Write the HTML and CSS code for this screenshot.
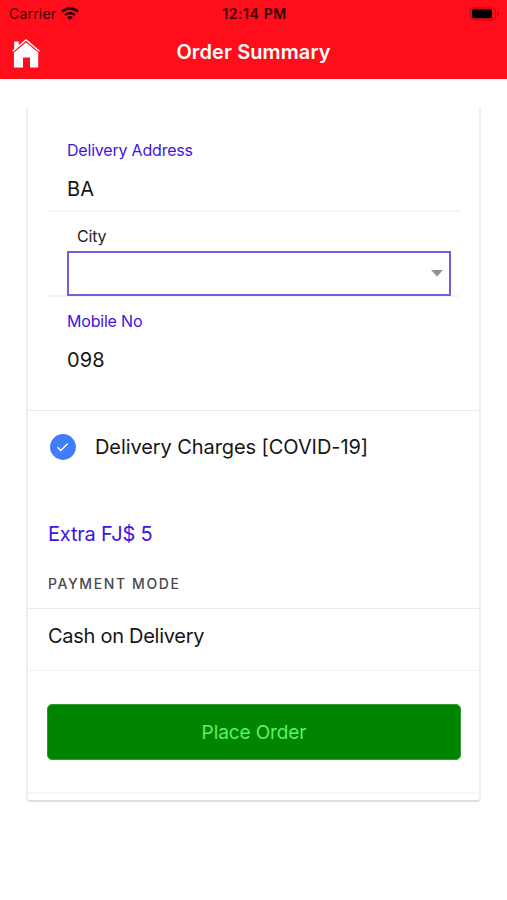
FILE: index.html
```html
<!DOCTYPE html>
<html lang="en">
<head>
  <meta charset="UTF-8">
  <meta name="viewport" content="width=device-width, initial-scale=1.0">
  <title>Order Summary</title>
  <link rel="stylesheet" href="styles.css">
</head>
<body>
  <header class="header">
    <div class="status-bar">
      <div class="carrier">
        <span class="carrier-name">Carrier</span>
        <svg class="wifi" width="18" height="14" viewBox="0 0 18 14">
          <path d="M1 4.6a11.6 11.6 0 0 1 16 0" fill="none" stroke="currentColor" stroke-width="2.5"/>
          <path d="M4.1 8a7.2 7.2 0 0 1 9.8 0" fill="none" stroke="currentColor" stroke-width="2.3"/>
          <path d="M6.2 10.3a4.1 4.1 0 0 1 5.6 0L9 13.1z" fill="currentColor"/>
        </svg>
      </div>
      <span class="time">12:14 PM</span>
      <svg class="battery" width="31" height="14" viewBox="0 0 31 14">
        <rect x="1.5" y="0.9" width="25" height="12" rx="3.6" fill="none" stroke="#bd0711" stroke-width="1"/>
        <rect x="3" y="2.3" width="20" height="9" rx="1.6" fill="#000"/>
        <path d="M28.3 5v4c1.5-.6 1.5-3.4 0-4z" fill="#900010"/>
      </svg>
    </div>
    <div class="nav-bar">
      <a class="home" href="#" aria-label="Home">
        <svg width="28" height="30" viewBox="0 0 28 30">
          <path d="M2.2 2.4h4.6v4L2.2 10.3z" fill="#fff"/>
          <path d="M0.6 12.3L14 1l13.4 11.3" fill="none" stroke="#fff" stroke-width="1.4"/>
          <path d="M14 3.6l12.2 10V28.5h-8.2v-10h-7v10H1.9V13.6z" fill="#fff"/>
        </svg>
      </a>
      <h1>Order Summary</h1>
    </div>
  </header>

  <main class="card">
    <form class="address-form">
      <div class="field">
        <label>Delivery Address</label>
        <div class="value">BA</div>
      </div>
      <div class="field city">
        <label>City</label>
        <div class="select">
          <svg width="12" height="7" viewBox="0 0 12 7"><path d="M0 0h12L6 6.5z" fill="#929292"/></svg>
        </div>
      </div>
      <div class="field mobile">
        <label>Mobile No</label>
        <div class="value">098</div>
      </div>
    </form>

    <section class="charges">
      <div class="charge-row">
        <svg class="check" width="26" height="26" viewBox="0 0 26 26">
          <circle cx="13" cy="13" r="12.9" fill="#3f7dfb"/>
          <path d="M7.5 13.3l3.3 3.3 7-7.1" fill="none" stroke="#fff" stroke-width="1.4"/>
        </svg>
        <span class="charge-label">Delivery Charges [COVID-19]</span>
      </div>
      <div class="extra">Extra FJ$ 5</div>
      <h2>PAYMENT MODE</h2>
    </section>

    <div class="payment">Cash on Delivery</div>
    <div class="actions">
      <button type="button">Place Order</button>
    </div>
  </main>
</body>
</html>
```
FILE: styles.css
```css
* {
  box-sizing: border-box;
}
body {
  margin: 0;
  background-color: #fff;
  color: #161616;
  font-family: Inter, "Liberation Sans", sans-serif;
}
.header {
  height: 79px;
  background-color: #ff0d1b;
}
.status-bar {
  display: grid;
  grid-template-columns: 1fr auto 1fr;
  align-items: center;
  height: 27px;
  padding: 0 7px 0 9px;
  font-size: 14px;
  color: #3a0004;
}
.carrier {
  display: flex;
  align-items: center;
  gap: 5px;
}
.carrier-name {
  letter-spacing: 0.2px;
}
.wifi {
  color: #1c0002;
}
.time {
  font-weight: 600;
  letter-spacing: 0.6px;
}
.battery {
  justify-self: end;
}
.nav-bar {
  display: grid;
  grid-template-columns: 1fr auto 1fr;
  align-items: center;
  height: 50px;
  padding: 0 12px;
}
.home {
  display: flex;
  padding-top: 3px;
}
h1 {
  margin: 0;
  color: #fff;
  font-size: 20px;
  font-weight: 600;
  letter-spacing: 0.1px;
}
.card {
  width: 455px;
  height: 694px;
  margin: 29px 0 0 26px;
  border: 2px solid #eee;
  border-top: none;
  border-bottom-color: #dfdfdf;
  border-radius: 0 0 4px 4px;
}
.address-form {
  height: 303px;
  padding: 0 19px 0 20px;
  border-bottom: 1px solid #eaeaea;
}
.field {
  padding: 30px 10px 0 19px;
  border-bottom: 2px solid #f5f5f5;
}
.field label {
  display: block;
  font-size: 16px;
  line-height: 24px;
  letter-spacing: -0.2px;
  color: #4114de;
}
.field .value {
  margin-top: 12px;
  font-size: 20px;
  line-height: 30px;
  letter-spacing: 0.1px;
}
.field:first-child {
  height: 104px;
}
.city {
  height: 85px;
  padding-top: 12px;
}
.city label {
  padding-left: 10px;
  color: #1d1d1d;
}
.select {
  display: flex;
  align-items: center;
  justify-content: flex-end;
  height: 45px;
  margin: 3px -1px 0 0;
  padding-right: 6px;
  border: 2px solid #7b5bdd;
}
.mobile {
  padding-top: 12px;
  border-bottom: none;
}
.charges {
  height: 198px;
  padding: 20px 20px 0;
  border-bottom: 1px solid #eaeaea;
}
.charge-row {
  display: flex;
  align-items: center;
  gap: 19px;
  height: 32px;
  padding-left: 2px;
}
.charge-label,
.extra,
.payment {
  font-size: 20px;
}
.charge-label {
  letter-spacing: -0.08px;
}
.extra {
  margin-top: 56px;
  line-height: 30px;
  letter-spacing: -0.2px;
  color: #4114de;
}
h2 {
  margin: 25px 0 0;
  font-size: 14px;
  font-weight: 500;
  line-height: 20px;
  letter-spacing: 1.6px;
  color: #4a4a4a;
}
.payment {
  height: 62px;
  padding: 12px 20px 0;
  border-bottom: 1px solid #f1f1f1;
  line-height: 30px;
  letter-spacing: -0.28px;
}
.actions {
  height: 123px;
  padding: 33px 19px 0;
  border-bottom: 2px solid #f6f6f6;
}
button {
  width: 414px;
  height: 56px;
  border: 1px solid #2f9a2f;
  border-radius: 5px;
  background-color: #008500;
  color: #5df06c;
  font-family: inherit;
  font-size: 19px;
  letter-spacing: -0.1px;
}
```
